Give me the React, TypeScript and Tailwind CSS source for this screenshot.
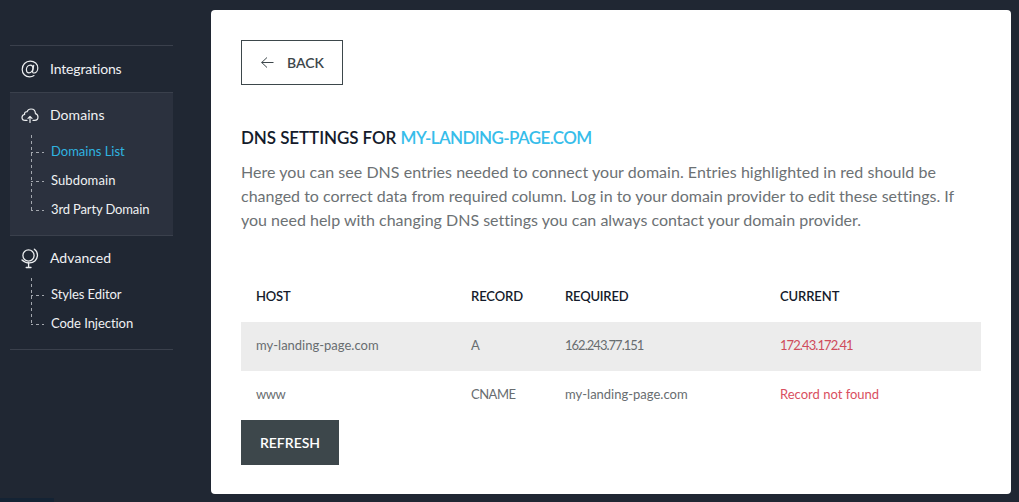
import type { ReactNode } from "react";

function AtIcon() {
  return (
    <svg className="size-[18px]" viewBox="0 0 18 18" fill="none" stroke="#eceef0" strokeWidth="1.2" strokeLinecap="round">
      <path d="M13 15.6C11.8 16.4 10.400 16.900 8.700 16.900C4.400 16.900 1.200 13.800 1.200 9.400C1.200 4.700 4.700 1.100 9.200 1.100C13.600 1.100 16.800 4 16.800 8C16.800 11.200 14.900 13 13.100 13C11.900 13 11.400 12.300 11.600 11.200L12.700 5.300" />
      <path d="M12 8.200C12 6.300 11 5.100 9.400 5.100C7.200 5.100 5.400 7.200 5.400 9.700C5.400 11.600 6.500 12.800 8 12.800C10.200 12.800 12 10.600 12 8.200Z" />
    </svg>
  );
}

function CloudIcon() {
  return (
    <svg className="mt-[2px] size-[18px]" viewBox="0 0 18 18" fill="none" stroke="#eceef0" strokeWidth="1.2" strokeLinecap="round" strokeLinejoin="round">
      <path d="M6 13.400H4.300C2.400 13.400 1 12.200 1 10.500C1 8.900 2 7.700 3.600 7.500C3.200 5.800 4.300 4.500 6 4.800C6.700 3 8.200 2 10 2C12.600 2 14.400 3.900 14.400 6.600C16 7.100 17 8.400 17 10.100C17 12 15.500 13.400 13.700 13.400H12" />
      <path d="M9 15.500V9.600M7 11.300L9 9.300L11 11.300" />
    </svg>
  );
}

function GlobeIcon() {
  return (
    <svg className="mt-[2px] h-[22px] w-[18px]" viewBox="0 0 18 22" fill="none" stroke="#eceef0" strokeWidth="1.3" strokeLinecap="round">
      <circle cx="7.500" cy="7.500" r="5.600" />
      <path d="M13.400 1.200C15.500 2.700 16.700 5.100 16.400 7.900C16 12 12.700 14.900 8.600 14.900C5.500 14.900 2.800 13.900 1 12" />
      <path d="M7.600 15V19.400M5.200 19.500H10" />
    </svg>
  );
}

function Group({ icon, label, active, items }: { icon: ReactNode; label: string; active?: boolean; items: { text: string; className: string }[] }) {
  return (
    <div className={active ? "border-t border-[#3a404c] bg-[#2b313e] pb-[11px]" : "border-t border-[#3a404c] pb-[11px]"}>
      <div className="flex h-11 items-center pl-[11px]">
        <span className="flex w-[29px]">{icon}</span>
        <span className="pb-[2px] text-[14px] tracking-[0.05px]">{label}</span>
      </div>
      <ul className="relative">
        <svg className="absolute top-[-2px] left-[21px]" width="13" height={items.length * 29} fill="none" stroke="#a3a7ae" strokeDasharray="3 3">
          <path d={`M0.500 0V${items.length * 29 - 12}`} />
          {items.map((item, i) => (
            <path key={item.text} d={`M0 ${i * 29 + 17.500}H13`} strokeDashoffset="1" />
          ))}
        </svg>
        {items.map((item) => (
          <li key={item.text} className="flex h-[29px] items-center pl-[41px] text-[13px]">
            <span className={item.className}>{item.text}</span>
          </li>
        ))}
      </ul>
    </div>
  );
}

export default function App() {
  return (
    <div className="flex h-[502px] w-[1019px] overflow-hidden bg-[#202733] font-['Lato',sans-serif] [font-variant-ligatures:none]">
      <div className="flex w-[211px] flex-col justify-between">
        <nav className="mt-[45px] ml-[10px] w-[163px] border-b border-[#3a404c] text-[#f0f1f3]">
          <div className="flex h-[47px] items-center border-t border-[#3a404c] pl-[11px]">
            <span className="flex w-[29px]"><AtIcon /></span>
            <span className="pb-[2px] text-[14px] tracking-[-0.14px]">Integrations</span>
          </div>
          <Group
            icon={<CloudIcon />}
            label="Domains"
            active
            items={[
              { text: "Domains List", className: "text-[#2fb4e0]" },
              { text: "Subdomain", className: "tracking-[0.1px]" },
              { text: "3rd Party Domain", className: "tracking-[-0.14px]" },
            ]}
          />
          <Group
            icon={<GlobeIcon />}
            label="Advanced"
            items={[
              { text: "Styles Editor", className: "tracking-[-0.07px]" },
              { text: "Code Injection", className: "tracking-[-0.05px]" },
            ]}
          />
        </nav>
        <div className="h-1 w-[54px] bg-[#142334]" />
      </div>
      <main className="mt-[10px] h-[484px] w-[800px] rounded bg-white px-[30px] pt-[30px]">
        <button className="flex h-[45px] w-[102px] items-center border border-[#3d474b] pl-[19px] text-[14px] font-semibold text-[#3d474b]">
          <svg className="mr-[13px]" width="13" height="12" viewBox="0 0 13 12" fill="none" stroke="#3d474b">
            <path d="M0.500 5.500H12.500M6 0.500L0.700 5.500L6 10.500" />
          </svg>
          <span>BACK</span>
        </button>
        <h1 className="mt-[41px] text-[17px] leading-6 font-semibold text-[#141b2b]">
          <span className="tracking-[-0.08px]">DNS SETTINGS FOR</span> <span className="tracking-[-0.6px] text-[#37bdea]">MY-LANDING-PAGE.COM</span>
        </h1>
        <p className="mt-[10px] text-[16px] leading-6 whitespace-nowrap text-[#6c7174]">
          <span className="tracking-[0.04px]">Here you can see DNS entries needed to connect your domain. Entries highlighted in red should be</span><br />
          <span>changed to correct data from required column. Log in to your domain provider to edit these settings. If</span><br />
          <span>you need help with changing DNS settings you can always contact your domain provider.</span>
        </p>
        <div className="mt-[40px] text-[13px] text-[#686d70]">
          <div className="grid h-[50px] grid-cols-[215px_94px_215px_1fr] items-center pl-[15px] font-semibold text-[#141b2b]">
            <span className="tracking-[-0.2px]">HOST</span><span className="tracking-[-0.1px]">RECORD</span><span className="tracking-[-0.2px]">REQUIRED</span><span className="tracking-[-0.1px]">CURRENT</span>
          </div>
          <div className="grid h-[49px] grid-cols-[215px_94px_215px_1fr] items-center bg-[#ececec] pb-[2px] pl-[15px]">
            <span>my-landing-page.com</span><span>A</span><span className="tracking-[-0.98px]">162.243.77.151</span><span className="tracking-[-0.92px] text-[#cf4b5b]">172.43.172.41</span>
          </div>
          <div className="grid h-[49px] grid-cols-[215px_94px_215px_1fr] items-center pb-[2px] pl-[15px]">
            <span className="tracking-[-0.5px]">www</span><span className="tracking-[-0.5px]">CNAME</span><span>my-landing-page.com</span><span className="text-[#d94f60]">Record not found</span>
          </div>
        </div>
        <button className="flex h-[45px] w-[98px] items-center justify-center bg-[#3d474b] text-[14px] font-semibold text-white">REFRESH</button>
      </main>
    </div>
  );
}
